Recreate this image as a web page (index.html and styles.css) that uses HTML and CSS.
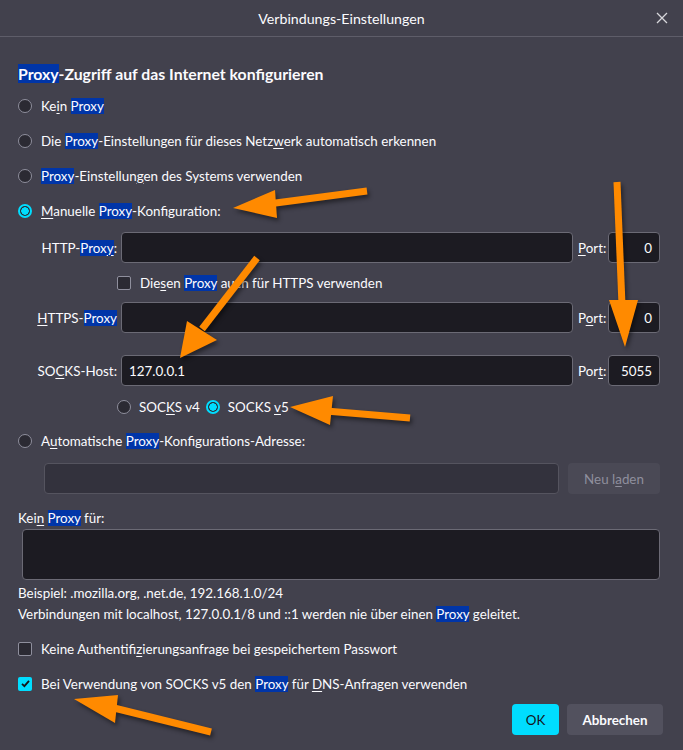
FILE: index.html
```html
<!DOCTYPE html>
<html lang="de">
<head>
    <meta charset="UTF-8">
    <meta name="viewport" content="width=device-width, initial-scale=1.0">
    <title>Verbindungs-Einstellungen</title>
    <link rel="stylesheet" href="styles.css">
</head>
<body>
    <div class="dialog">
        <header class="titlebar">
            <span class="title">Verbindungs-Einstellungen</span>
            <span class="close">
                <svg width="12" height="12" viewBox="0 0 12 12"><path d="M1 1L11 11M11 1L1 11" stroke="#d7d7db" stroke-width="1.3"/></svg>
            </span>
        </header>

        <section class="content">
            <h1 class="heading"><mark>Proxy</mark>-Zugriff auf das Internet konfigurieren</h1>

            <div class="radio-row"><span class="radio"></span><span>Ke<u>i</u>n <mark>Proxy</mark></span></div>
            <div class="radio-row"><span class="radio"></span><span>Die <mark>Proxy</mark>-Einstellungen für dieses Netz<u>w</u>erk automatisch erkennen</span></div>
            <div class="radio-row"><span class="radio"></span><span><mark>Proxy</mark>-Einstellun<u>g</u>en des Systems verwenden</span></div>
            <div class="radio-row"><span class="radio checked"></span><span><u>M</u>anuelle <mark>Proxy</mark>-Konfiguration:</span></div>

            <div class="manual">
                <div class="field-row">
                    <span class="field-label">HTTP-<mark>Prox<u>y</u></mark>:</span>
                    <span class="input"></span>
                    <span class="port-label"><u>P</u>ort:</span>
                    <span class="input port">0</span>
                </div>
                <div class="check-row sub">
                    <span class="checkbox"></span><span>Die<u>s</u>en <mark>Proxy</mark> auch für HTTPS verwenden</span>
                </div>
                <div class="field-row">
                    <span class="field-label"><u>H</u>TTPS-<mark>Proxy</mark></span>
                    <span class="input"></span>
                    <span class="port-label">P<u>o</u>rt:</span>
                    <span class="input port">0</span>
                </div>
                <div class="field-row socks">
                    <span class="field-label">SO<u>C</u>KS-Host:</span>
                    <span class="input">127.0.0.1</span>
                    <span class="port-label">Por<u>t</u>:</span>
                    <span class="input port">5055</span>
                </div>
                <div class="version-row">
                    <span class="radio"></span><span>SOC<u>K</u>S v4</span>
                    <span class="radio checked second"></span><span>SOCKS <u>v</u>5</span>
                </div>
            </div>

            <div class="radio-row auto"><span class="radio"></span><span>A<u>u</u>tomatische <mark>Proxy</mark>-Konfigurations-Adresse:</span></div>
            <div class="url-row">
                <span class="input disabled"></span>
                <span class="btn disabled">Neu l<u>a</u>den</span>
            </div>

            <div class="noproxy-label">Kei<u>n</u> <mark>Proxy</mark> für:</div>
            <div class="textarea"></div>
            <p class="hint">Beispiel: .mozilla.org, .net.de, 192.168.1.0/24</p>
            <p class="hint">Verbindungen mit localhost, 127.0.0.1/8 und ::1 werden nie über einen <mark>Proxy</mark> geleitet.</p>

            <div class="check-row first">
                <span class="checkbox"></span><span>Keine Authentifi<u>z</u>ierungsanfrage bei gespeichertem Passwort</span>
            </div>
            <div class="check-row">
                <span class="checkbox checked">
                    <svg width="13" height="13" viewBox="0 0 13 13"><path d="M3 6.8L5.4 9.2L10 3.8" fill="none" stroke="#15141a" stroke-width="1.8"/></svg>
                </span>
                <span>Bei Verwendung von SOCKS v5 den <mark>Proxy</mark> für <u>D</u>NS-Anfragen verwenden</span>
            </div>

            <div class="buttons">
                <span class="btn primary">OK</span>
                <span class="btn cancel">Abbrechen</span>
            </div>
        </section>

        <!-- Markierungspfeile -->
        <svg class="arrows" width="683" height="750" viewBox="0 0 683 750">
            <g fill="#ff8a00" stroke="#ff8a00">
                <line x1="367" y1="191" x2="268" y2="204" stroke-width="7"/>
                <polygon points="233,208 275,190 277,218" stroke="none"/>

                <line x1="257" y1="258" x2="202" y2="329" stroke-width="7"/>
                <polygon points="180,358 187,321 217,340" stroke="none"/>

                <line x1="617" y1="182" x2="622" y2="305" stroke-width="7"/>
                <polygon points="625,347 609,300 638,300" stroke="none"/>

                <line x1="410" y1="418" x2="326" y2="411" stroke-width="7"/>
                <polygon points="290,407 333,396 330,425" stroke="none"/>

                <line x1="211" y1="732" x2="110" y2="707" stroke-width="7"/>
                <polygon points="74,699 118,695 115,723" stroke="none"/>
            </g>
        </svg>
    </div>
</body>
</html>
```
FILE: styles.css
```css
/* Общие стили */
body {
    margin: 0;
    background: #42414d;
    font-family: Lato, "Noto Sans", sans-serif;
    font-size: 13.4px;
    color: #fbfbfe;
}

mark {
    background: #0035a8;
    color: #fbfbfe;
}

u {
    text-decoration-thickness: 1px;
    text-underline-offset: 2px;
}

.dialog {
    position: relative;
    width: 683px;
    height: 750px;
    overflow: hidden;
}

/* Заголовок окна */
.titlebar {
    position: relative;
    height: 36px;
    border-bottom: 1px solid #5e5d69;
    display: flex;
    align-items: center;
    justify-content: center;
}

.title {
    font-size: 14.2px;
}

.close {
    position: absolute;
    right: 15px;
    top: 12px;
    display: flex;
}

.content {
    padding: 0 23px 0 18px;
}

.heading {
    margin: 27px 0 0;
    font-size: 15.8px;
    font-weight: 700;
    line-height: 20px;
}

/* Радио и чекбоксы */
.radio-row,
.check-row {
    height: 35px;
    display: flex;
    align-items: center;
    gap: 9px;
}

.radio-row:first-of-type {
    margin-top: 4px;
}

.radio {
    width: 14px;
    height: 14px;
    box-sizing: border-box;
    border: 1px solid #8f8f9d;
    border-radius: 50%;
    background: #2b2a33;
    flex-shrink: 0;
}

.radio.checked {
    border: 2px solid #00ddff;
    background: radial-gradient(circle, #00ddff 0 3.5px, #2b2a33 4px);
}

.checkbox {
    width: 14px;
    height: 14px;
    box-sizing: border-box;
    border: 1px solid #8f8f9d;
    border-radius: 2px;
    background: #2b2a33;
    flex-shrink: 0;
    display: flex;
}

.checkbox.checked {
    border: none;
    background: #00ddff;
}

.checkbox svg {
    margin: 0.5px;
}

/* Ручная настройка */
.manual {
    margin-top: 4px;
}

.field-row {
    display: grid;
    grid-template-columns: 103px 1fr 35px 52px;
    height: 31px;
    align-items: center;
}

.field-row.socks {
    margin-top: 22px;
}

.field-label {
    text-align: right;
    padding-right: 4px;
}

.port-label {
    padding-left: 5px;
}

.input {
    height: 31px;
    box-sizing: border-box;
    background: #1c1b22;
    border: 1px solid #6b6a75;
    border-radius: 4px;
    padding: 0 7px;
    display: flex;
    align-items: center;
}

.input.port {
    justify-content: flex-end;
}

.input.disabled {
    background: #33323d;
    border-color: #55545f;
}

.check-row.sub {
    height: 39px;
    padding-left: 99px;
}

.version-row {
    height: 42px;
    padding-left: 99px;
    display: flex;
    align-items: center;
    gap: 8px;
}

.version-row .radio.second {
    margin-left: -2px;
}

.radio-row.auto {
    height: 26px;
}

.url-row {
    margin-top: 9px;
    padding-left: 26px;
    display: flex;
    gap: 9px;
}

.url-row .input {
    width: 515px;
}

.btn {
    height: 31px;
    box-sizing: border-box;
    padding: 0 13px;
    border-radius: 4px;
    background: #52515e;
    font-weight: 700;
    display: flex;
    align-items: center;
    justify-content: center;
}

.url-row .btn {
    width: 92px;
}

.btn.disabled {
    background: #4a4955;
    color: #8f8f9d;
    font-weight: 400;
}

.noproxy-label {
    margin-top: 14px;
    line-height: 20px;
}

.textarea {
    margin: 1px 0 0 4px;
    height: 51px;
    box-sizing: border-box;
    background: #1c1b22;
    border: 1px solid #6b6a75;
    border-radius: 4px;
}

.hint {
    margin: 0;
    line-height: 21px;
}

.hint:first-of-type {
    margin-top: 3px;
}

.check-row.first {
    margin-top: 7px;
    height: 34px;
}

/* Кнопки */
.buttons {
    margin: 3px -3px 0 0;
    display: flex;
    justify-content: flex-end;
    gap: 8px;
}

.btn.primary {
    width: 47px;
    padding: 0;
    background: #00ddff;
    color: #15141a;
    font-weight: 400;
}

.btn.cancel {
    width: 96px;
    padding: 0;
}

.arrows {
    position: absolute;
    left: 0;
    top: 0;
    pointer-events: none;
    filter: drop-shadow(2px 3px 2px rgba(0, 0, 0, 0.45));
}
```
